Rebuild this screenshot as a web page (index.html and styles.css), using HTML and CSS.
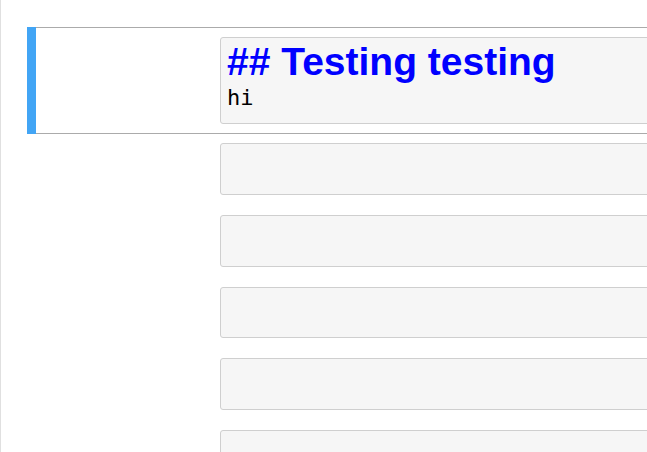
FILE: index.html
```html
<!DOCTYPE html>
<html>
<head>
<meta charset="utf-8">
<link rel="stylesheet" href="styles.css">
</head>
<body>
<div class="notebook">
  <div class="cell selected">
    <div class="prompt"></div>
    <div class="input">
      <div class="line h1">## Testing testing</div>
      <div class="line code">hi</div>
    </div>
  </div>
  <div class="cell"><div class="prompt"></div><div class="input empty"></div></div>
  <div class="cell"><div class="prompt"></div><div class="input empty"></div></div>
  <div class="cell"><div class="prompt"></div><div class="input empty"></div></div>
  <div class="cell"><div class="prompt"></div><div class="input empty"></div></div>
  <div class="cell"><div class="prompt"></div><div class="input empty"></div></div>
</div>
</body>
</html>
```

FILE: styles.css
```css
html, body {
  margin: 0;
  padding: 0;
  overflow: hidden;
  background: #fff;
}
.notebook {
  border-left: 1px solid #e0e0e0;
  padding: 27px 0 0 26px;
  width: 1000px;
  height: 452px;
  box-sizing: border-box;
  overflow: hidden;
}
.cell {
  position: relative;
  display: flex;
  border: 1px solid transparent;
  padding: 9px 0 9px 0;
}
.cell + .cell {
  padding-top: 8px;
  padding-bottom: 10px;
}
.cell.selected {
  border-color: #ababab;
}
.cell.selected::before {
  content: "";
  position: absolute;
  top: -1px;
  bottom: -1px;
  left: -1px;
  width: 9px;
  background: #42a5f5;
}
.prompt {
  width: 192px;
  flex: none;
}
.input {
  flex: 1;
  background: #f6f6f6;
  border: 1px solid #cfcfcf;
  border-radius: 3px;
  padding: 3px 6px 13px 6px;
}
.input.empty {
  min-height: 51.75px;
  box-sizing: border-box;
  padding: 0;
}
.line.h1 {
  font-family: "Liberation Sans", Arial, sans-serif;
  font-weight: bold;
  font-size: 39px;
  line-height: 42px;
  color: #0000ff;
}
.line.code {
  font-family: "DejaVu Sans Mono", monospace;
  font-size: 22px;
  line-height: 24px;
  margin-top: 3px;
  color: #000;
}
```
